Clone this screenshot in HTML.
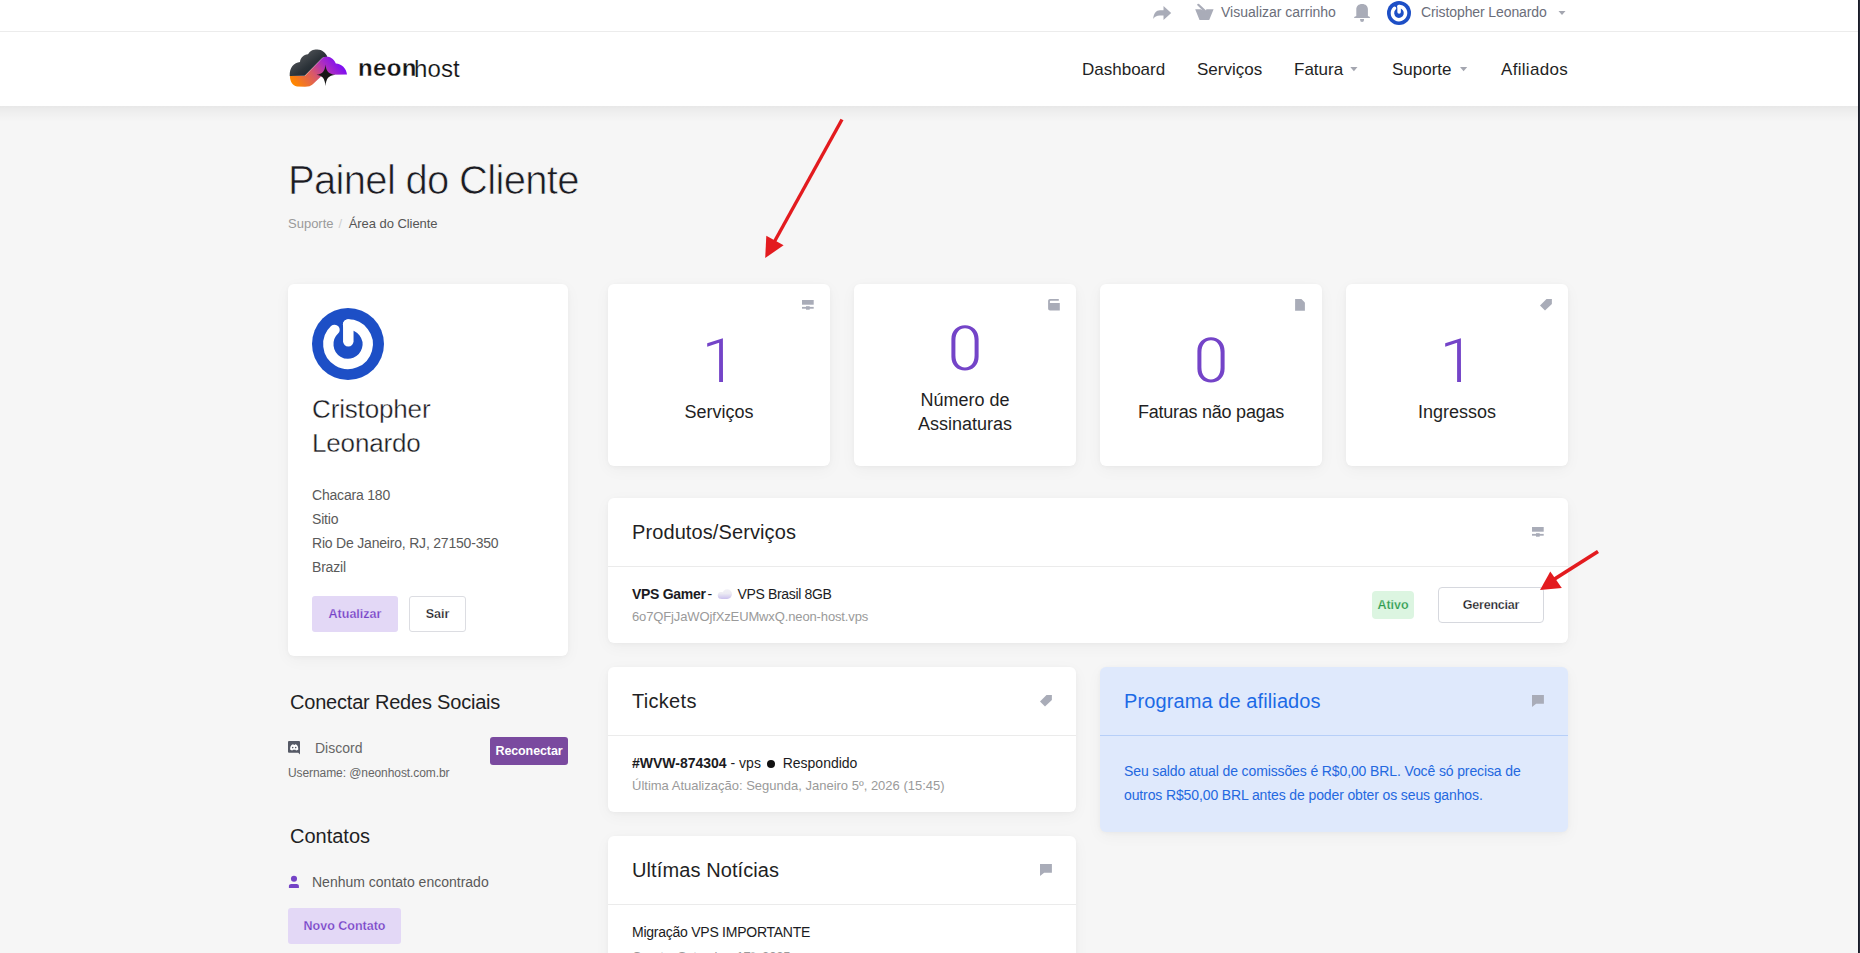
<!DOCTYPE html>
<html lang="pt-BR">
<head>
<meta charset="utf-8">
<title>Painel do Cliente - neonhost</title>
<style>
*{box-sizing:border-box;margin:0;padding:0}
html,body{width:1860px;height:953px;overflow:hidden}
body{background:#f6f6f6;font-family:"Liberation Sans",sans-serif;color:#222;position:relative}
.a{position:absolute;white-space:nowrap;line-height:1}
#topbar{position:absolute;left:0;top:0;width:1858px;height:32px;background:#fff;border-bottom:1px solid #ececec}
#nav{position:absolute;left:0;top:32px;width:1858px;height:74px;background:#fff}
#navsh{position:absolute;left:0;top:106px;width:1858px;height:16px;background:linear-gradient(to bottom,rgba(0,0,0,.06),rgba(0,0,0,.03) 35%,rgba(0,0,0,0))}
#rline{position:absolute;left:1858px;top:0;width:2px;height:953px;background:linear-gradient(to right,#191b27 50%,#262a37 50%)}
.card{position:absolute;background:#fff;border-radius:6px;box-shadow:0 1px 4px rgba(0,0,0,.035),0 4px 16px rgba(0,0,0,.04)}
.tb{font-size:14px;color:#6b6e7a}
.nv{font-size:17px;color:#1f1f24;top:61px}
.caret{position:absolute;width:0;height:0;border-left:4px solid transparent;border-right:4px solid transparent;border-top:4px solid #a4a6b0}
.num{font-size:63px;color:#7444c8;-webkit-text-stroke:1.4px #fff}
.lbl{font-size:18px;color:#1f1f24;text-align:center}
.ph{font-size:20px;color:#1f1f24}
.ico{position:absolute}
.div{position:absolute;height:1px;background:#ebebeb}
.btn{position:absolute;border-radius:3px;font-weight:bold;font-size:12.5px;text-align:center}
</style>
</head>
<body>
<div id="topbar"></div>
<div id="nav"></div><div id="navsh"></div>

<!-- top bar text -->
<div class="a tb" style="left:1221px;top:5px">Visualizar carrinho</div>
<div class="a tb" style="left:1421px;top:5px;letter-spacing:-0.1px">Cristopher Leonardo</div>

<!-- logo text -->
<div class="a" style="left:358px;top:56px;font-size:24px;font-weight:bold;color:#141414;letter-spacing:0.4px;-webkit-text-stroke:0.3px #fff">neon</div>
<div class="a" style="left:414px;top:57px;font-size:24px;color:#141414;-webkit-text-stroke:0.15px #fff;letter-spacing:0.1px">host</div>

<!-- nav -->
<div class="a nv" style="left:1082px">Dashboard</div>
<div class="a nv" style="left:1197px">Serviços</div>
<div class="a nv" style="left:1294px">Fatura</div>
<div class="a nv" style="left:1392px">Suporte</div>
<div class="a nv" style="left:1501px;letter-spacing:0.3px">Afiliados</div>

<!-- title -->
<div class="a" style="left:288px;top:160px;font-size:40px;color:#1b1b22;letter-spacing:-0.68px;-webkit-text-stroke:0.7px #f6f6f6">Painel do Cliente</div>
<div class="a" style="left:288px;top:217px;font-size:13px;color:#9a9a9a">Suporte<span style="color:#cfcfcf;margin:0 6.5px 0 5px">/</span><span style="color:#555;letter-spacing:-0.05px">Área do Cliente</span></div>

<!-- sidebar card -->
<div class="card" style="left:288px;top:284px;width:280px;height:372px"></div>
<div class="a" style="left:312px;top:392px;font-size:26px;line-height:34px;color:#1b1b22;white-space:normal;width:240px;letter-spacing:-0.15px;-webkit-text-stroke:0.35px #fff">Cristopher<br>Leonardo</div>
<div class="a" style="left:312px;top:483px;font-size:14px;line-height:24px;color:#5a5a5a;letter-spacing:-0.2px">Chacara 180<br>Sitio<br>Rio De Janeiro, RJ, 27150-350<br>Brazil</div>
<div class="btn" style="left:312px;top:596px;width:86px;height:36px;line-height:36px;background:#e3d8f6;color:#7443c6;-webkit-text-stroke:0.25px #e3d8f6">Atualizar</div>
<div class="btn" style="left:409px;top:596px;width:57px;height:36px;line-height:34px;background:#fff;border:1px solid #dcdde2;color:#1b1b22;-webkit-text-stroke:0.25px #fff">Sair</div>

<!-- social -->
<div class="a ph" style="left:290px;top:692px;letter-spacing:-0.2px">Conectar Redes Sociais</div>
<div class="a" style="left:315px;top:741px;font-size:14px;color:#666">Discord</div>
<div class="btn" style="left:490px;top:737px;width:78px;height:28px;line-height:28px;background:#7a4a9f;color:#fff;font-size:12.5px;letter-spacing:-0.1px">Reconectar</div>
<div class="a" style="left:288px;top:767px;font-size:12px;color:#666;letter-spacing:-0.08px">Username: @neonhost.com.br</div>
<div class="a ph" style="left:290px;top:826px">Contatos</div>
<div class="a" style="left:312px;top:875px;font-size:14px;color:#5a5a5a">Nenhum contato encontrado</div>
<div class="btn" style="left:288px;top:908px;width:113px;height:36px;line-height:36px;background:#e3d8f6;color:#7443c6;-webkit-text-stroke:0.25px #e3d8f6">Novo Contato</div>

<!-- stat cards -->
<div class="card" style="left:608px;top:284px;width:222px;height:182px"></div>
<div class="card" style="left:854px;top:284px;width:222px;height:182px"></div>
<div class="card" style="left:1100px;top:284px;width:222px;height:182px"></div>
<div class="card" style="left:1346px;top:284px;width:222px;height:182px"></div>
<div class="a lbl" style="left:608px;width:222px;top:403px">Serviços</div>
<div class="a lbl" style="left:854px;width:222px;top:388px;line-height:24px">Número de<br>Assinaturas</div>
<div class="a lbl" style="left:1100px;width:222px;top:403px;letter-spacing:-0.25px">Faturas não pagas</div>
<div class="a lbl" style="left:1346px;width:222px;top:403px">Ingressos</div>

<!-- products panel -->
<div class="card" style="left:608px;top:498px;width:960px;height:145px"></div>
<div class="div" style="left:608px;top:566px;width:960px"></div>
<div class="a ph" style="left:632px;top:522px;letter-spacing:0.1px">Produtos/Serviços</div>
<div class="a" style="left:632px;top:587px;font-size:14px;color:#1b1b22;font-weight:bold;letter-spacing:-0.3px">VPS Gamer</div>
<div class="a" style="left:707.5px;top:587px;font-size:14px;color:#1b1b22">-</div>
<div class="a" style="left:737.5px;top:587px;font-size:14px;color:#1b1b22;letter-spacing:-0.35px">VPS Brasil 8GB</div>
<div class="a" style="left:632px;top:610px;font-size:13px;color:#9a9a9a;letter-spacing:-0.13px">6o7QFjJaWOjfXzEUMwxQ.neon-host.vps</div>
<div class="a" style="left:1372px;top:591px;width:42px;height:28px;line-height:28px;text-align:center;background:#dcf5e1;border-radius:4px;font-size:12.5px;font-weight:bold;color:#2f9a4c;-webkit-text-stroke:0.25px #dcf5e1">Ativo</div>
<div class="btn" style="left:1438px;top:587px;width:106px;height:36px;line-height:34px;background:#fff;border:1px solid #d6d8de;border-radius:4px;color:#1b1b22;letter-spacing:-0.2px;-webkit-text-stroke:0.25px #fff">Gerenciar</div>

<!-- tickets -->
<div class="card" style="left:608px;top:667px;width:468px;height:145px"></div>
<div class="div" style="left:608px;top:735px;width:468px"></div>
<div class="a ph" style="left:632px;top:691px;letter-spacing:0.3px">Tickets</div>
<div class="a" style="left:632px;top:756px;font-size:14px;color:#1b1b22"><b>#WVW-874304</b> - vps <span style="display:inline-block;width:8px;height:8px;border-radius:50%;background:#111;margin:0 4px 0 2px;position:relative;top:0px"></span> Respondido</div>
<div class="a" style="left:632px;top:779px;font-size:13px;color:#9a9a9a">Última Atualização: Segunda, Janeiro 5º, 2026 (15:45)</div>

<!-- news -->
<div class="card" style="left:608px;top:836px;width:468px;height:200px"></div>
<div class="div" style="left:608px;top:904px;width:468px"></div>
<div class="a ph" style="left:632px;top:860px;letter-spacing:0.1px">Ultímas Notícias</div>
<div class="a" style="left:632px;top:925px;font-size:14px;color:#1b1b22;letter-spacing:-0.25px">Migração VPS IMPORTANTE</div>
<div class="a" style="left:632px;top:949.5px;font-size:13px;color:#9a9a9a;letter-spacing:-0.15px">Quarta, Setembro 17º, 2025</div>

<!-- affiliates -->
<div class="card" style="left:1100px;top:667px;width:468px;height:165px;background:#dfe9fc"></div>
<div class="div" style="left:1100px;top:735px;width:468px;background:#b7cff8"></div>
<div class="a ph" style="left:1124px;top:691px;color:#1c6ae6;letter-spacing:0.1px">Programa de afiliados</div>
<div class="a" style="left:1124px;top:759px;font-size:14px;line-height:24px;color:#2468e0;letter-spacing:-0.12px">Seu saldo atual de comissões é R$0,00 BRL. Você só precisa de<br>outros R$50,00 BRL antes de poder obter os seus ganhos.</div>

<div id="rline"></div>
<svg id="ov" width="1860" height="953" viewBox="0 0 1860 953" style="position:absolute;left:0;top:0;pointer-events:none">
<defs>
<symbol id="grav" viewBox="0 0 24 24">
<circle cx="12" cy="12" r="12" fill="#1d4fc6"/>
<path d="M12,5.5 A6.57,6.57 0 1 1 7.52,7.27" fill="none" stroke="#fff" stroke-width="3.45" stroke-linecap="round"/>
<line x1="12.1" y1="5.5" x2="12.1" y2="11.1" stroke="#fff" stroke-width="3.5" stroke-linecap="round"/>
</symbol>
<symbol id="srv" viewBox="0 0 12 10">
<rect x="0" y="0" width="11.7" height="4.7" fill="#a9acb8"/>
<rect x="0" y="6.9" width="11.7" height="1.8" fill="#a9acb8"/>
<rect x="4" y="6.2" width="3.7" height="3.5" fill="#a9acb8"/>
</symbol>
<symbol id="tag" viewBox="0 0 12 12">
<path d="M11.9,0 L6.5,0 L0,6.4 L5,11.6 L11.9,4.9 Z" fill="#a9acb8"/>
</symbol>
<symbol id="chat" viewBox="0 0 12 12">
<path d="M0,0 L11.9,0 L11.9,8.7 L4.1,8.7 L0,11.9 Z" fill="#a9acb8"/>
</symbol>
<linearGradient id="gdark" x1="0" y1="0" x2="1" y2="1">
<stop offset="0" stop-color="#68696c"/><stop offset="0.55" stop-color="#2c3339"/><stop offset="1" stop-color="#0e1a24"/>
</linearGradient>
<linearGradient id="gband" x1="0" y1="0.7" x2="0.95" y2="0.3">
<stop offset="0" stop-color="#ff8600"/><stop offset="0.42" stop-color="#d8586a"/><stop offset="0.72" stop-color="#a82ac8"/><stop offset="1" stop-color="#780af8"/></linearGradient>
<linearGradient id="gcloud" x1="0" y1="0" x2="0" y2="1">
<stop offset="0" stop-color="#f4f3f8"/><stop offset="1" stop-color="#cdc3ee"/>
</linearGradient>
<linearGradient id="gcloud2" gradientUnits="userSpaceOnUse" x1="0" y1="589" x2="0" y2="599"><stop offset="0" stop-color="#f2f1f6"/><stop offset="0.45" stop-color="#ecebf3"/><stop offset="1" stop-color="#cbc1ee"/></linearGradient>
</defs>

<!-- top bar icons -->
<path d="M1163.5,6 L1171.2,13.1 L1163.5,20 L1163.5,15.5 L1160,15.5 C1156.5,15.5 1154.5,17 1153.2,19 C1153.6,13.5 1156.2,10.3 1160,10.3 L1163.5,10.3 Z" fill="#a9acb8"/>
<path d="M1195.2,9.3 L1200.8,9.3 L1205.8,11.6 L1206.3,9.3 L1213.6,9.3 L1209.2,19.9 L1199.5,19.9 Z" fill="#a9acb8"/>
<line x1="1198.3" y1="4.8" x2="1205.6" y2="11.6" stroke="#a9acb8" stroke-width="2.2" stroke-linecap="round"/>
<path d="M1356.3,16 L1356.3,9.5 C1356.3,6 1358.5,3.9 1362.1,3.9 C1365.7,3.9 1367.9,6 1367.9,9.5 L1367.9,16 L1369.9,17 L1369.9,18 L1354.2,18 L1354.2,17 Z" fill="#a9acb8"/>
<path d="M1360.1,19 L1364,19 L1364,20 A1.95,1.95 0 0 1 1360.1,20 Z" fill="#a9acb8"/>
<use href="#grav" x="1387" y="1" width="24" height="24"/>
<path d="M1558.5,11 L1565.5,11 L1562,15 Z" fill="#a4a6b0"/>

<!-- nav carets -->
<path d="M1350.3,67 L1357.5,67 L1353.9,71.2 Z" fill="#a4a6b0"/>
<path d="M1460,67 L1467.2,67 L1463.6,71.2 Z" fill="#a4a6b0"/>

<!-- logo -->
<g transform="translate(285,45)">
<path d="M4.7,31 C4.3,22.5 9,17.5 15,17 C15.5,12.5 18.5,10 23,9.3 C25,5.5 28.5,4.3 32.3,4.4 C37,4.5 40.8,7.5 42.4,11.8 L37.5,12.8 L19.7,30.8 Z" fill="url(#gdark)"/>
<path d="M4.9,31 L19.8,31 L37.3,13.3 C39.5,11.6 41,11.5 43,11.8 C46.5,12.3 49.5,15 50.8,18.5 C56.5,18.8 61.5,23.5 62,29.6 L45,29.8 L36,31.6 L27.8,39.3 C26,41 23.5,41.8 20,41.8 L12,41.5 C7.5,40.5 5,36.5 4.9,31 Z" fill="url(#gband)"/>
<path d="M40.5,19.5 C41.2,26.5 43.5,29 50.3,29.8 C43.5,30.6 41.2,33.5 40.5,41 C39.8,33.5 37.5,30.6 31.6,29.8 C37.5,29 39.8,26.5 40.5,19.5 Z" fill="#171717"/>
</g>

<!-- sidebar avatar -->
<use href="#grav" x="312" y="308" width="72" height="72"/>

<!-- discord -->
<rect x="288" y="741" width="12" height="11.8" rx="1" fill="#565a66"/>
<path d="M298,752.5 L300,754.6 L300,751 Z" fill="#565a66"/>
<path d="M290.1,749.5 C290.1,747 290.9,745.3 292.2,744.6 L293.4,744.3 L293.8,745 L294.6,745 L295,744.3 L296.2,744.6 C297.5,745.3 298.3,747 298.3,749.5 C297.5,750.2 296.6,750.5 296,750.5 L295.5,749.8 L292.9,749.8 L292.4,750.5 C291.8,750.5 290.9,750.2 290.1,749.5 Z" fill="#fff"/>
<circle cx="292.7" cy="747.6" r="0.8" fill="#565a66"/><circle cx="295.7" cy="747.6" r="0.8" fill="#565a66"/>

<!-- person -->
<circle cx="294" cy="878.8" r="3.05" fill="#7443c6"/>
<path d="M288.9,887.9 L288.9,886 C288.9,884.8 289.9,883.9 291.2,883.9 L296.6,883.9 C297.9,883.9 298.9,884.8 298.9,886 L298.9,887.9 Z" fill="#7443c6"/>

<!-- stat icons -->
<use href="#srv" x="802" y="300" width="12" height="10"/>
<path d="M1050,299 L1058.8,299 L1058.8,300.7 L1050.6,300.7 C1050.1,300.7 1049.9,301 1049.9,301.6 L1049.9,303 L1059.8,303 L1059.8,310.6 L1050.1,310.6 C1048.9,310.6 1048.1,309.8 1048.1,308.6 L1048.1,301 C1048.1,299.8 1048.9,299 1050,299 Z" fill="#a9acb8"/>
<path d="M1295.1,299 L1301.4,299 L1304.9,302.4 L1304.9,310.7 L1295.1,310.7 Z" fill="#a9acb8"/>
<use href="#tag" x="1540" y="299" width="12" height="12"/>

<!-- panel icons -->
<use href="#srv" x="1532" y="527" width="12" height="10"/>
<use href="#tag" x="1040" y="695" width="12" height="12"/>
<use href="#chat" x="1040" y="864" width="12" height="12"/>
<use href="#chat" x="1532" y="695" width="12" height="12"/>

<!-- cloud -->
<g fill="url(#gcloud2)"><circle cx="721.2" cy="595.4" r="3.4"/><circle cx="727.2" cy="594.1" r="4.8"/><rect x="721.2" y="594" width="6" height="5" /></g>


<!-- numbers -->
<path d="M707.2,343.2 L722.9,338.2 L723,382 L719.1,382 L719.1,342.8 L707.2,346.8 Z" fill="#7444c8"/>
<path d="M1445.2,343.2 L1460.9,338.2 L1461,382 L1457.1,382 L1457.1,342.8 L1445.2,346.8 Z" fill="#7444c8"/>
<path id="zero" d="M965,325.2 C972.8,325.2 978.6,330.5 978.6,339 L978.6,356.8 C978.6,365.3 972.8,370.6 965,370.6 C957.2,370.6 951.4,365.3 951.4,356.8 L951.4,339 C951.4,330.5 957.2,325.2 965,325.2 Z M965,328.35 C970.6,328.35 974.6,332.8 974.6,340.5 L974.6,355.3 C974.6,363 970.6,367.45 965,367.45 C959.4,367.45 955.4,363 955.4,355.3 L955.4,340.5 C955.4,332.8 959.4,328.35 965,328.35 Z" fill="#7444c8" fill-rule="evenodd"/>
<use href="#zero" x="246" y="12"/>
<!-- arrows -->
<line x1="842" y1="119.5" x2="772" y2="246" stroke="#e31b1f" stroke-width="3.4"/>
<path d="M765.2,258 L766.3,235.8 L783.6,245.3 Z" fill="#e31b1f"/>
<line x1="1598" y1="551.5" x2="1553" y2="580" stroke="#e31b1f" stroke-width="3.8"/>
<path d="M1540,590 L1550.3,571.5 L1561.8,588 Z" fill="#e31b1f"/>
</svg>

</body>
</html>
